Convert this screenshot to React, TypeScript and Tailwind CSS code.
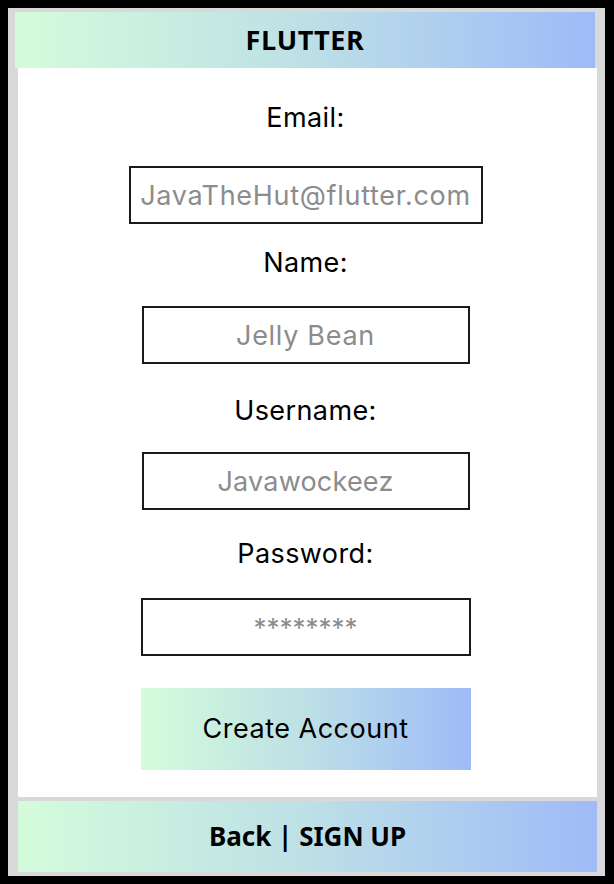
import React from 'react';

const fields = [
  { label: 'Email:', placeholder: 'JavaTheHut@flutter.com', box: 'w-[354px] mt-[33px]', labelGap: 'mt-[35px]', text: 'text-[27px] tracking-[0.7px]' },
  { label: 'Name:', placeholder: 'Jelly Bean', box: 'w-[328px] mt-[28px]', labelGap: 'mt-[24px]', text: 'text-[27px] tracking-[0.7px]' },
  { label: 'Username:', placeholder: 'Javawockeez', box: 'w-[328px] mt-[26px]', labelGap: 'mt-[32px]', text: 'text-[27px] tracking-[0.2px]' },
  { label: 'Password:', placeholder: '********', box: 'w-[330px] mt-[29px]', labelGap: 'mt-[29px]', text: 'text-[26px]' },
];

export default function App() {
  return (
    <div className="w-[614px] h-[884px] bg-black pt-[8px] pb-[8px] pl-[8px] pr-[9px]" style={{ fontFamily: 'Inter, "Noto Sans", sans-serif' }}>
      <div className="h-full bg-[#d9d9d9] flex flex-col pt-[4px] pb-[4px]">
        {/* Header */}
        <div className="ml-[7px] mr-[10px] h-[56px] bg-gradient-to-r from-[#d4fcdb] via-[#bde0e6] to-[#9fbaf7] flex items-center justify-center">
          <span className="text-[27px] font-bold text-black tracking-[0.6px]" style={{ fontFamily: '"Open Sans", "Noto Sans", sans-serif' }}>FLUTTER</span>
        </div>

        {/* Form body */}
        <div className="ml-[10px] mr-[8px] h-[729px] bg-white flex flex-col items-center pr-[4px]">
          {fields.map(f => (
            <React.Fragment key={f.label}>
              <div className={`${f.labelGap} text-[27px] leading-[30px] tracking-[0.4px] text-black`}>{f.label}</div>
              <input
                type="text"
                placeholder={f.placeholder}
                className={`${f.box} ${f.text} h-[58px] border-2 border-[#1a1a1a] bg-white text-center text-black placeholder:text-[#8c8c8c] outline-none`}
              />
            </React.Fragment>
          ))}
          <button
            type="button"
            className="mt-[32px] w-[330px] h-[82px] bg-gradient-to-r from-[#d4fcdb] via-[#bde0e6] to-[#9fbaf7] text-[27px] tracking-[0.5px] text-black"
          >
            Create Account
          </button>
        </div>

        {/* Footer */}
        <div className="ml-[10px] mr-[8px] mt-[4px] h-[71px] bg-gradient-to-r from-[#d4fcdb] via-[#bde0e6] to-[#9fbaf7] flex items-center justify-center">
          <span className="text-[26px] font-bold text-black" style={{ fontFamily: '"Noto Sans", sans-serif' }}>Back | SIGN UP</span>
        </div>
      </div>
    </div>
  );
}
